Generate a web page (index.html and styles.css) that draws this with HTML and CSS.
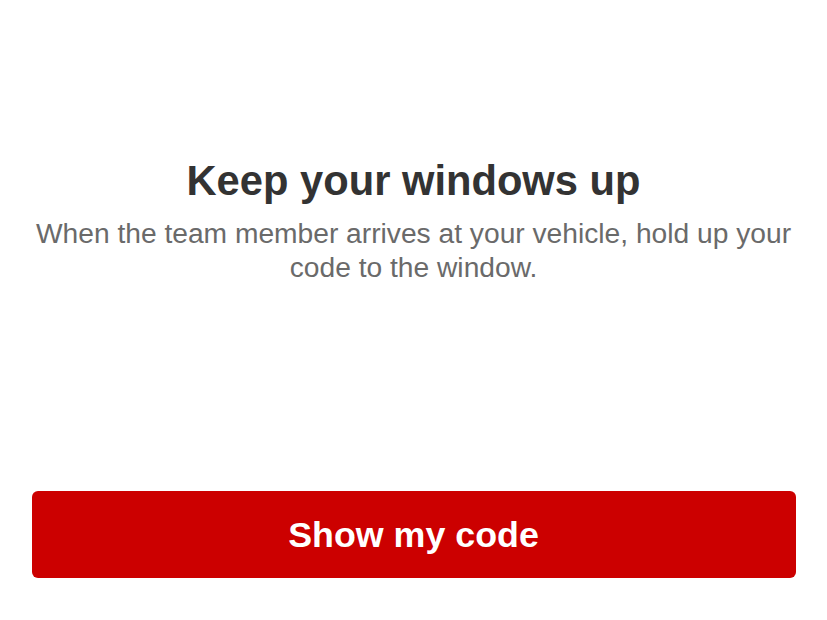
FILE: index.html
```html
<!DOCTYPE html>
<html lang="en">
<head>
<meta charset="utf-8">
<title>Keep your windows up</title>
<link rel="stylesheet" href="styles.css">
</head>
<body>
<main class="screen">
  <section class="message">
    <h1 class="title">Keep your windows up</h1>
    <p class="subtitle">When the team member arrives at your vehicle, hold up your code to the window.</p>
  </section>
  <button class="primary-btn" type="button">Show my code</button>
</main>
</body>
</html>
```
FILE: styles.css
```css
html, body {
  margin: 0;
  padding: 0;
  background: #ffffff;
}

body {
  font-family: "Liberation Sans", Arial, Helvetica, sans-serif;
  width: 827px;
  height: 620px;
  overflow: hidden;
}

.screen {
  display: flex;
  flex-direction: column;
  align-items: center;
  padding-top: 157px;
}

.message {
  display: flex;
  flex-direction: column;
  align-items: center;
  text-align: center;
  gap: 11px;
  width: 800px;
}

.title {
  margin: 0;
  font-size: 41.7px;
  line-height: 48px;
  font-weight: 700;
  color: #333333;
}

.subtitle {
  margin: 0;
  font-size: 28.2px;
  line-height: 34px;
  color: #6a6a6a;
}

.primary-btn {
  margin-top: 207px;
  width: 764px;
  height: 87px;
  border: none;
  border-radius: 6px;
  background: #cc0000;
  color: #ffffff;
  font-family: "Liberation Sans", Arial, Helvetica, sans-serif;
  font-size: 35.8px;
  font-weight: 700;
  padding: 2px 0 0;
  display: flex;
  align-items: center;
  justify-content: center;
}
```
